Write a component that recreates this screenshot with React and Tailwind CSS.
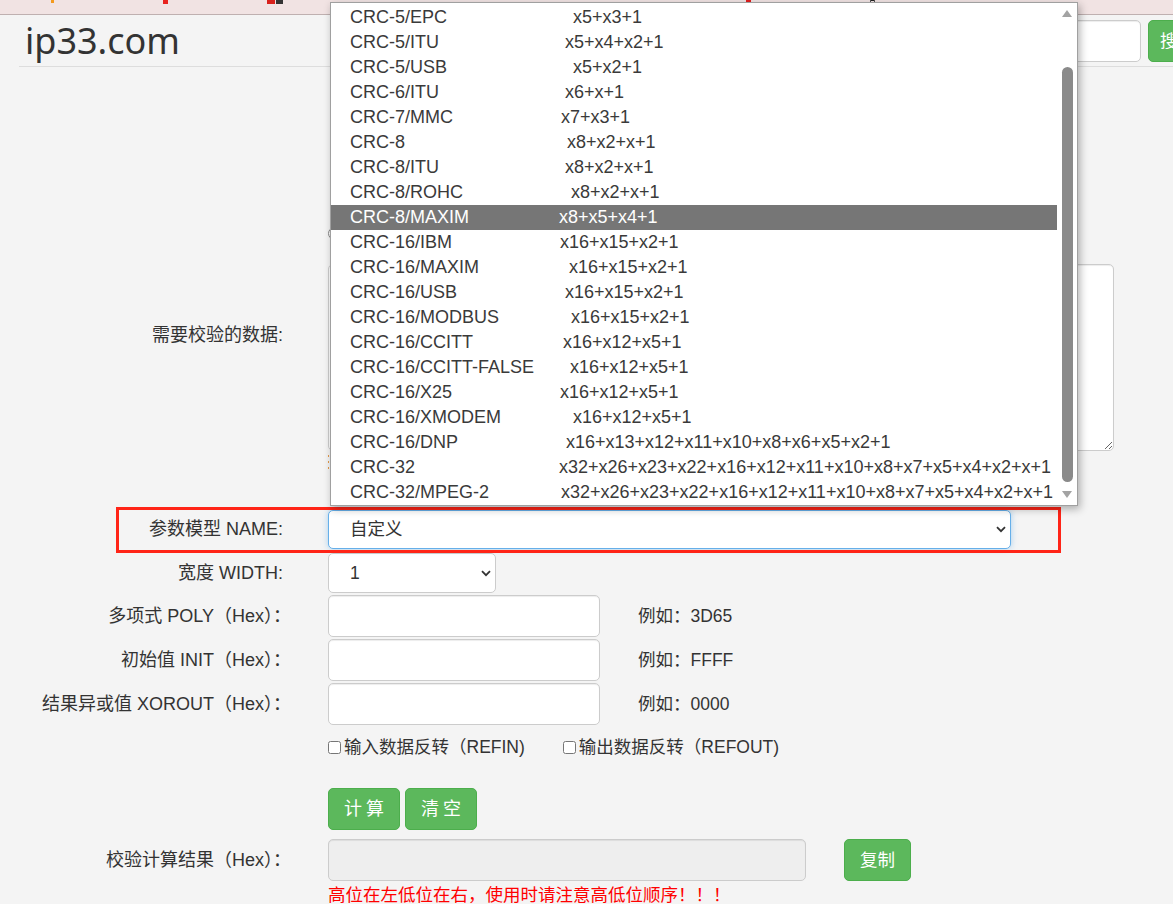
import React from "react";

const options = [
  ["CRC-5/EPC", "x5+x3+1", "w-[223px]"],
  ["CRC-5/ITU", "x5+x4+x2+1", "w-[215px]"],
  ["CRC-5/USB", "x5+x2+1", "w-[223px]"],
  ["CRC-6/ITU", "x6+x+1", "w-[215px]"],
  ["CRC-7/MMC", "x7+x3+1", "w-[211px]"],
  ["CRC-8", "x8+x2+x+1", "w-[217px]"],
  ["CRC-8/ITU", "x8+x2+x+1", "w-[215px]"],
  ["CRC-8/ROHC", "x8+x2+x+1", "w-[221px]"],
  ["CRC-8/MAXIM", "x8+x5+x4+1", "w-[209px]"],
  ["CRC-16/IBM", "x16+x15+x2+1", "w-[210px]"],
  ["CRC-16/MAXIM", "x16+x15+x2+1", "w-[219px]"],
  ["CRC-16/USB", "x16+x15+x2+1", "w-[215px]"],
  ["CRC-16/MODBUS", "x16+x15+x2+1", "w-[221px]"],
  ["CRC-16/CCITT", "x16+x12+x5+1", "w-[213px]"],
  ["CRC-16/CCITT-FALSE", "x16+x12+x5+1", "w-[220px]"],
  ["CRC-16/X25", "x16+x12+x5+1", "w-[210px]"],
  ["CRC-16/XMODEM", "x16+x12+x5+1", "w-[223px]"],
  ["CRC-16/DNP", "x16+x13+x12+x11+x10+x8+x6+x5+x2+1", "w-[216px]"],
  ["CRC-32", "x32+x26+x23+x22+x16+x12+x11+x10+x8+x7+x5+x4+x2+x+1", "w-[209px]"],
  ["CRC-32/MPEG-2", "x32+x26+x23+x22+x16+x12+x11+x10+x8+x7+x5+x4+x2+x+1", "w-[211px]"],
];

const font = "font-['Liberation_Sans','Noto_Sans_CJK_SC',sans-serif]";

function Chevron() {
  return (
    <svg width="10" height="7" viewBox="0 0 10 7" className="shrink-0">
      <polyline points="1,1.2 5,5.2 9,1.2" fill="none" stroke="#333" strokeWidth="1.8" />
    </svg>
  );
}

// wide = label ends with a fullwidth colon, whose glyph sits left in its box
function Row({ label, children, className = "", labelClass = "", wide = false }) {
  return (
    <div className={`flex ${className}`}>
      <div
        className={`shrink-0 text-right text-[18px] text-[#333] ${
          wide ? "w-[291px]" : "w-[283px]"
        } ${labelClass}`}
      >
        {label}
      </div>
      <div className={`flex items-center ${wide ? "ml-[37px]" : "ml-[45px]"}`}>{children}</div>
    </div>
  );
}

function TextInput({ className = "" }) {
  return (
    <div
      className={`h-[42px] rounded-[5px] border border-[#ccc] bg-white shadow-[inset_0_1px_1px_rgba(0,0,0,0.075)] ${className}`}
    />
  );
}

function GreenButton({ children, className = "" }) {
  return (
    <button
      className={`h-[42px] rounded-[5px] border border-[#4cae4c] bg-[#5cb85c] text-white ${className}`}
    >
      {children}
    </button>
  );
}

function Dropdown() {
  return (
    <div className="absolute left-[330px] top-[2px] flex w-[748px] border border-[#a0a0a0] bg-white shadow-[2px_3px_8px_rgba(0,0,0,0.3)]">
      <div className="w-[726px] pt-[2px]">
        {options.map(([name, poly, w]) => {
          const active = name === "CRC-8/MAXIM";
          return (
            <div
              key={name}
              className={`flex h-[25px] items-center whitespace-nowrap pl-[19px] text-[18px] font-['Liberation_Sans',sans-serif] ${
                active ? "bg-[#767676] text-white" : "text-[#3a3a3a]"
              }`}
            >
              <span className={`shrink-0 ${w}`}>{name}</span>
              <span>{poly}</span>
            </div>
          );
        })}
      </div>
      <div className="flex w-[20px] flex-col items-center">
        <svg width="10" height="7" viewBox="0 0 10 7" className="mt-[7px]">
          <polygon points="5,0 10,7 0,7" fill="#a3a3a3" />
        </svg>
        <div className="mt-[50px] h-[415px] w-[11px] rounded-full bg-[#8a8a8a]" />
        <svg width="10" height="7" viewBox="0 0 10 7" className="mt-[9px]">
          <polygon points="0,0 10,0 5,7" fill="#a3a3a3" />
        </svg>
      </div>
    </div>
  );
}

export default function App() {
  return (
    <div className={`relative h-[904px] w-[1173px] overflow-hidden bg-[#f4f4f4] ${font}`}>
      {/* browser bookmark strip */}
      <div className="relative h-[15px] border-b border-[#bfb0b0] bg-[#f1e3e3]">
        <span className="absolute left-[51px] top-0 h-[3px] w-[3px] bg-[#f39a1e]" />
        <span className="absolute left-[163px] top-0 h-[4px] w-[5px] bg-[#e8231f]" />
        <span className="absolute left-[267px] top-0 h-[4px] w-[8px] bg-[#d8211c]" />
        <span className="absolute left-[276px] top-0 h-[4px] w-[7px] bg-[#333]" />
        <span className="absolute left-[746px] top-0 h-[4px] w-[5px] rounded-b-full bg-[#e21d1d]" />
        <span className="absolute left-[870px] top-0 h-[4px] w-[5px] rounded-b-full border border-[#222]" />
      </div>

      {/* header */}
      <div className="ml-[19px] flex h-[52px] justify-between border-b border-[#ddd]">
        <div className="pl-[6px] pt-[8px] font-['Noto_Sans',sans-serif] text-[36px] leading-[36px] text-[#333]">
          ip33.com
        </div>
        <div className="mr-[-37px] flex gap-[7px] pt-[5px]">
          <TextInput className="w-[300px]" />
          <GreenButton className="w-[62px] pr-[14px] text-right text-[17.5px]">搜索</GreenButton>
        </div>
      </div>

      {/* form */}
      <div className="pt-[159px]">
        <div className="ml-[328px] flex h-[14px] items-center">
          <span className="h-[13px] w-[13px] rounded-full border border-[#888] bg-white" />
        </div>

        <Row label="需要校验的数据:" className="mt-[24px] items-start" labelClass="pt-[59px] leading-[24px]">
          <textarea className="h-[187px] w-[786px] rounded-[5px] border border-[#ccc] bg-white shadow-[inset_0_1px_1px_rgba(0,0,0,0.075)] outline-none" />
        </Row>
        <div className="ml-[328px] flex h-[22px] flex-col justify-center gap-[4px]">
          <span className="h-[2px] w-[1px] bg-[#e39a4a]" />
          <span className="h-[2px] w-[1px] bg-[#e39a4a]" />
          <span className="h-[2px] w-[1px] bg-[#e39a4a]" />
        </div>

        <div className="relative mt-[37px]">
          <Row label="参数模型 NAME:" className="items-center">
            <div className="flex h-[39px] w-[683px] items-center justify-between rounded-[5px] border border-[#66afe9] bg-white pl-[21px] pr-[4px] text-[17.5px] text-[#333] shadow-[0_0_6px_rgba(102,175,233,0.55)]">
              <span>自定义</span>
              <Chevron />
            </div>
          </Row>
          <span className="absolute left-[116px] top-[-3px] h-[46px] w-[945px] border-[3px] border-[#ff2417]" />
        </div>

        <Row label="宽度 WIDTH:" className="mt-[4px] items-center">
          <div className="flex h-[40px] w-[168px] items-center justify-between rounded-[5px] border border-[#ccc] bg-white pl-[21px] pr-[4px] text-[17.5px] text-[#333]">
            <span>1</span>
            <Chevron />
          </div>
        </Row>

        {[
          ["多项式 POLY（Hex）：", "3D65"],
          ["初始值 INIT（Hex）：", "FFFF"],
          ["结果异或值 XOROUT（Hex）：", "0000"],
        ].map(([label, eg]) => (
          <Row key={label} label={label} wide className="mt-[2px] items-center">
            <TextInput className="w-[272px]" />
            <span className="ml-[38px] text-[17.5px] text-[#333]">例如：{eg}</span>
          </Row>
        ))}

        <div className="ml-[328px] mt-[12px] flex h-[20px] items-center text-[17.5px] text-[#333]">
          <label className="flex items-center">
            <input type="checkbox" className="m-0 h-[13px] w-[13px]" />
            <span className="ml-[3px]">输入数据反转（REFIN)</span>
          </label>
          <label className="ml-[38px] flex items-center">
            <input type="checkbox" className="m-0 h-[13px] w-[13px]" />
            <span className="ml-[3px]">输出数据反转（REFOUT)</span>
          </label>
        </div>

        <div className="ml-[328px] mt-[31px] flex gap-[5px]">
          <GreenButton className="w-[72px] pl-[4px] text-[18px] tracking-[4px]">计算</GreenButton>
          <GreenButton className="w-[72px] pl-[4px] text-[18px] tracking-[4px]">清空</GreenButton>
        </div>

        <Row label="校验计算结果（Hex）：" wide className="mt-[9px] items-center">
          <div className="h-[42px] w-[478px] rounded-[5px] border border-[#ccc] bg-[#eee] shadow-[inset_0_1px_1px_rgba(0,0,0,0.075)]" />
          <GreenButton className="ml-[38px] w-[67px] text-[17.5px]">复制</GreenButton>
        </Row>
        <div className="ml-[328px] mt-[3px] text-[17.5px] leading-[22px] text-[#ff0000]">
          高位在左低位在右，使用时请注意高低位顺序！！！
        </div>
      </div>

      <Dropdown />
    </div>
  );
}
